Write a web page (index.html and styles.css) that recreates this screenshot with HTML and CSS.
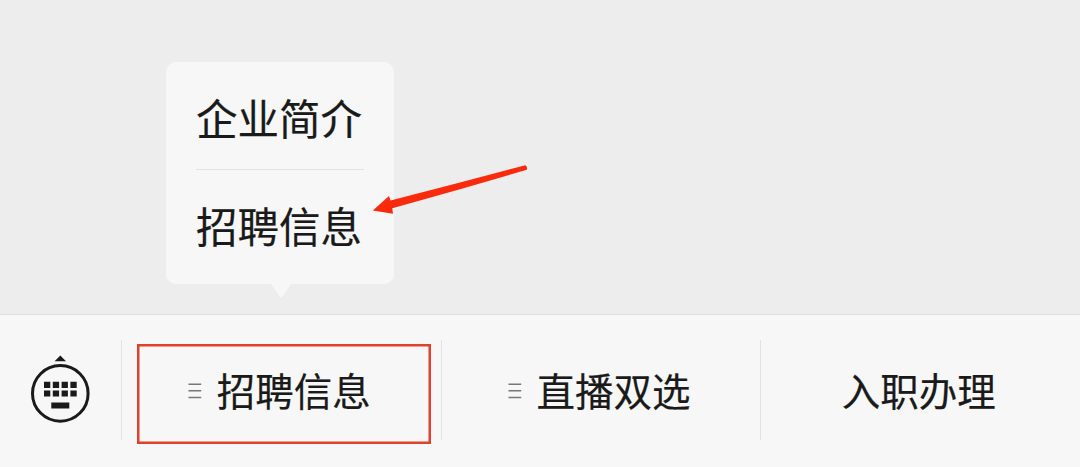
FILE: index.html
```html
<!DOCTYPE html>
<html lang="zh-CN">
<head>
<meta charset="utf-8">
<title>招聘信息</title>
<link rel="stylesheet" href="styles.css">
</head>
<body>
<main class="chat">
  <div class="popup">
    <div class="popup-item">企业简介</div>
    <div class="popup-item">招聘信息</div>
    <svg class="popup-tail" width="20" height="14" viewBox="0 0 20 14"><path d="M0 0H20L11.2 12.8Q10 14 8.8 12.8Z"/></svg>
  </div>
  <svg class="pointer" width="160" height="54" viewBox="370 162 160 54"><path d="M372.8 210.5L389 196L390.5 200.6L460 182.4L525.3 165.3Q527.8 167 526.8 169.8L460 189.2L392.3 208.2L393 213.8Z"/></svg>
</main>
<nav class="bar">
  <div class="keyboard">
    <svg width="62" height="70" viewBox="29 354 62 70">
      <path d="M60.3 355.6L66 361.3H54.6Z"/>
      <circle class="ring" cx="60.3" cy="393.4" r="27.8"/>
      <path d="M44 381.7h6.3v6.2h-6.3zM52.8 381.7h6.3v6.2h-6.3zM61.6 381.7h6.3v6.2h-6.3zM70.4 381.7h6.3v6.2h-6.3zM44 390.4h6.3v6.2h-6.3zM52.8 390.4h6.3v6.2h-6.3zM61.6 390.4h6.3v6.2h-6.3zM70.4 390.4h6.3v6.2h-6.3zM51.3 402.4h18v6h-18z"/>
    </svg>
  </div>
  <div class="tab selected">
    <svg class="lines" width="14" height="18" viewBox="0 0 14 18"><path d="M.5 2.2H13.2M.5 8.8H13.2M.5 15.5H13.2"/></svg>
    <span>招聘信息</span>
  </div>
  <div class="tab">
    <svg class="lines" width="14" height="18" viewBox="0 0 14 18"><path d="M.5 2.2H13.2M.5 8.8H13.2M.5 15.5H13.2"/></svg>
    <span>直播双选</span>
  </div>
  <div class="tab"><span>入职办理</span></div>
</nav>
</body>
</html>
```

FILE: styles.css
```css
*, *::after { box-sizing: border-box; }

body {
  margin: 0;
  height: 467px;
  display: flex;
  flex-direction: column;
  overflow: hidden;
  background: #ededed;
  color: #1a1a1a;
  font-family: "Noto Sans CJK SC", sans-serif;
  -webkit-text-stroke: 0.2px #1a1a1a;
}

svg { display: block; flex: none; }

.chat {
  position: relative;
  height: 314px;
  padding: 62px 0 0 166px;
}

.popup {
  position: relative;
  width: 228px;
  height: 222px;
  padding: 0 30px;
  border-radius: 10px;
  background: #f7f7f7;
}

.popup-item {
  height: 107px;
  padding-top: 5px;
  font-size: 41.5px;
  line-height: 100px;
  white-space: nowrap;
}

.popup-item + .popup-item { border-top: 1px solid #e3e3e3; }

.popup-tail {
  position: absolute;
  left: 105px;
  top: 222px;
  fill: #f7f7f7;
}

.pointer {
  position: absolute;
  left: 370px;
  top: 162px;
  fill: #fa2a0c;
}

.bar {
  height: 153px;
  display: flex;
  align-items: flex-start;
  padding-top: 25px;
  border-top: 1px solid #e0e0e0;
  background: #f7f7f7;
}

.keyboard {
  width: 121px;
  padding: 14px 0 0 29px;
  fill: #1a1a1a;
}

.ring { fill: none; stroke: #1a1a1a; stroke-width: 3; }

.tab {
  position: relative;
  flex: 1;
  height: 100px;
  display: flex;
  align-items: center;
  justify-content: center;
  gap: 15px;
  padding: 0 4px 3px 0;
  border-left: 1px solid #e3e3e3;
  font-size: 38.5px;
  line-height: 56px;
  white-space: nowrap;
}

.lines {
  margin-top: 5px;
  fill: none;
  stroke: #777;
  stroke-width: 1.6;
}

.selected::after {
  content: "";
  position: absolute;
  left: 15px;
  top: 4px;
  width: 294px;
  height: 100px;
  border: 2px solid #df412b;
  box-shadow: inset 0 0 0 0.5px #df412b;
}
```
